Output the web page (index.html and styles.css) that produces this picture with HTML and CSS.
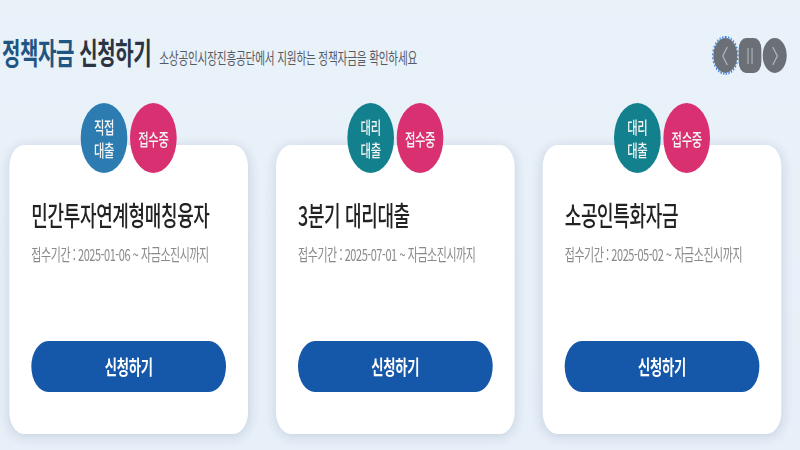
FILE: index.html
```html
<!DOCTYPE html>
<html lang="ko">
<head>
<meta charset="utf-8">
<title>정책자금 신청하기</title>
<link rel="stylesheet" href="styles.css">
</head>
<body>
<div class="viewport">
<div class="stage">
  <header class="head">
    <div class="titles">
      <h1 class="title"><span class="title-accent">정책자금</span> 신청하기</h1>
      <p class="subtitle">소상공인시장진흥공단에서 지원하는 정책자금을 확인하세요</p>
    </div>
    <div class="nav">
      <button class="nav-btn nav-round nav-focus" aria-label="이전">
        <svg viewBox="0 0 36 36" width="36" height="36"><path d="M21 9 L14 18 L21 27" fill="none" stroke="#b3b8be" stroke-width="1.6"/></svg>
      </button>
      <button class="nav-btn nav-pause" aria-label="정지">
        <svg viewBox="0 0 34 36" width="34" height="36"><path d="M14 10 V26 M20 10 V26" fill="none" stroke="#b3b8be" stroke-width="1.6"/></svg>
      </button>
      <button class="nav-btn nav-round" aria-label="다음">
        <svg viewBox="0 0 36 36" width="36" height="36"><path d="M15 9 L22 18 L15 27" fill="none" stroke="#b3b8be" stroke-width="1.6"/></svg>
      </button>
    </div>
  </header>

  <section class="cards">
    <div class="card-col">
      <div class="badges">
        <span class="badge badge-blue"><span class="badge-line">직접</span><span class="badge-line">대출</span></span>
        <span class="badge badge-pink">접수중</span>
      </div>
      <article class="card">
        <h2 class="card-title">민간투자연계형매칭융자</h2>
        <p class="card-date">접수기간 : 2025-01-06 ~ 자금소진시까지</p>
        <a class="card-btn" href="#">신청하기</a>
      </article>
    </div>
    <div class="card-col">
      <div class="badges">
        <span class="badge badge-teal"><span class="badge-line">대리</span><span class="badge-line">대출</span></span>
        <span class="badge badge-pink">접수중</span>
      </div>
      <article class="card">
        <h2 class="card-title">3분기 대리대출</h2>
        <p class="card-date">접수기간 : 2025-07-01 ~ 자금소진시까지</p>
        <a class="card-btn" href="#">신청하기</a>
      </article>
    </div>
    <div class="card-col">
      <div class="badges">
        <span class="badge badge-teal"><span class="badge-line">대리</span><span class="badge-line">대출</span></span>
        <span class="badge badge-pink">접수중</span>
      </div>
      <article class="card">
        <h2 class="card-title">소공인특화자금</h2>
        <p class="card-date">접수기간 : 2025-05-02 ~ 자금소진시까지</p>
        <a class="card-btn" href="#">신청하기</a>
      </article>
    </div>
  </section>
</div>
</div>
</body>
</html>
```

FILE: styles.css
```css
* { box-sizing: border-box; }
html, body {
  margin: 0;
  padding: 0;
  width: 800px;
  height: 450px;
  overflow: hidden;
  background: #e9f1f9;
}
body {
  font-family: "Noto Sans CJK KR", "Noto Sans", sans-serif;
}
.viewport {
  width: 800px;
  height: 450px;
  overflow: hidden;
}
.stage {
  width: 1200px;
  height: 450px;
  transform: scaleX(0.6667);
  transform-origin: 0 0;
  background: linear-gradient(#e9f1f9, #e7eff8);
}
.head {
  display: flex;
  justify-content: space-between;
  align-items: flex-start;
  padding: 38px 20px 0 3px;
  height: 103px;
}
.titles {
  display: flex;
  align-items: baseline;
  gap: 12px;
  margin-top: -4px;
}
.title {
  margin: 0;
  font-size: 30px;
  line-height: 34px;
  font-weight: 700;
  color: #2b3442;
  letter-spacing: -0.02em;
}
.title-accent { color: #1e5582; }
.subtitle {
  margin: 0;
  font-size: 16px;
  line-height: 20px;
  color: #555b63;
  letter-spacing: -0.02em;
}
.nav {
  display: flex;
  gap: 2px;
}
.nav-btn {
  border: 0;
  padding: 0;
  margin: 0;
  height: 35px;
  background: #6b7077;
  display: flex;
  align-items: center;
  justify-content: center;
}
.nav-round {
  width: 36px;
  border-radius: 50%;
}
.nav-pause {
  width: 34px;
  border-radius: 11px;
}
.nav-focus {
  outline: 2px dotted #3f86e0;
  outline-offset: 0;
}
.cards {
  display: flex;
  gap: 42px;
  padding-left: 14px;
}
.card-col {
  display: flex;
  flex-direction: column;
  align-items: center;
  width: 358px;
}
.badges {
  display: flex;
  gap: 4px;
  position: relative;
  z-index: 2;
}
.badge {
  width: 70px;
  height: 70px;
  border-radius: 50%;
  display: flex;
  flex-direction: column;
  align-items: center;
  justify-content: center;
  text-align: center;
  color: #f3f3f3;
  font-size: 17px;
  line-height: 25px;
  font-weight: 500;
  letter-spacing: -0.03em;
}
.badge-line {
  display: block;
  height: 23px;
  line-height: 23px;
}
.badge-blue { background: #2c7cb2; }
.badge-teal { background: #13808e; }
.badge-pink { background: #d93072; }
.card {
  width: 358px;
  height: 289px;
  margin-top: -28px;
  background: #fff;
  border-radius: 22px;
  box-shadow: 0 2px 14px rgba(40, 70, 110, 0.18);
  padding: 53px 33px 42px;
  display: flex;
  flex-direction: column;
}
.card-title {
  margin: 0;
  font-size: 27px;
  line-height: 34px;
  font-weight: 500;
  color: #222;
  letter-spacing: -0.02em;
}
.card-date {
  margin: 12px 0 0;
  font-size: 16.5px;
  line-height: 20px;
  color: #8a8a8a;
  letter-spacing: -0.04em;
}
.card-btn {
  margin-top: auto;
  height: 51px;
  border-radius: 26px;
  background: #1557a8;
  color: #fff;
  text-decoration: none;
  font-size: 20px;
  font-weight: 700;
  display: flex;
  align-items: center;
  justify-content: center;
  letter-spacing: -0.02em;
}
```
